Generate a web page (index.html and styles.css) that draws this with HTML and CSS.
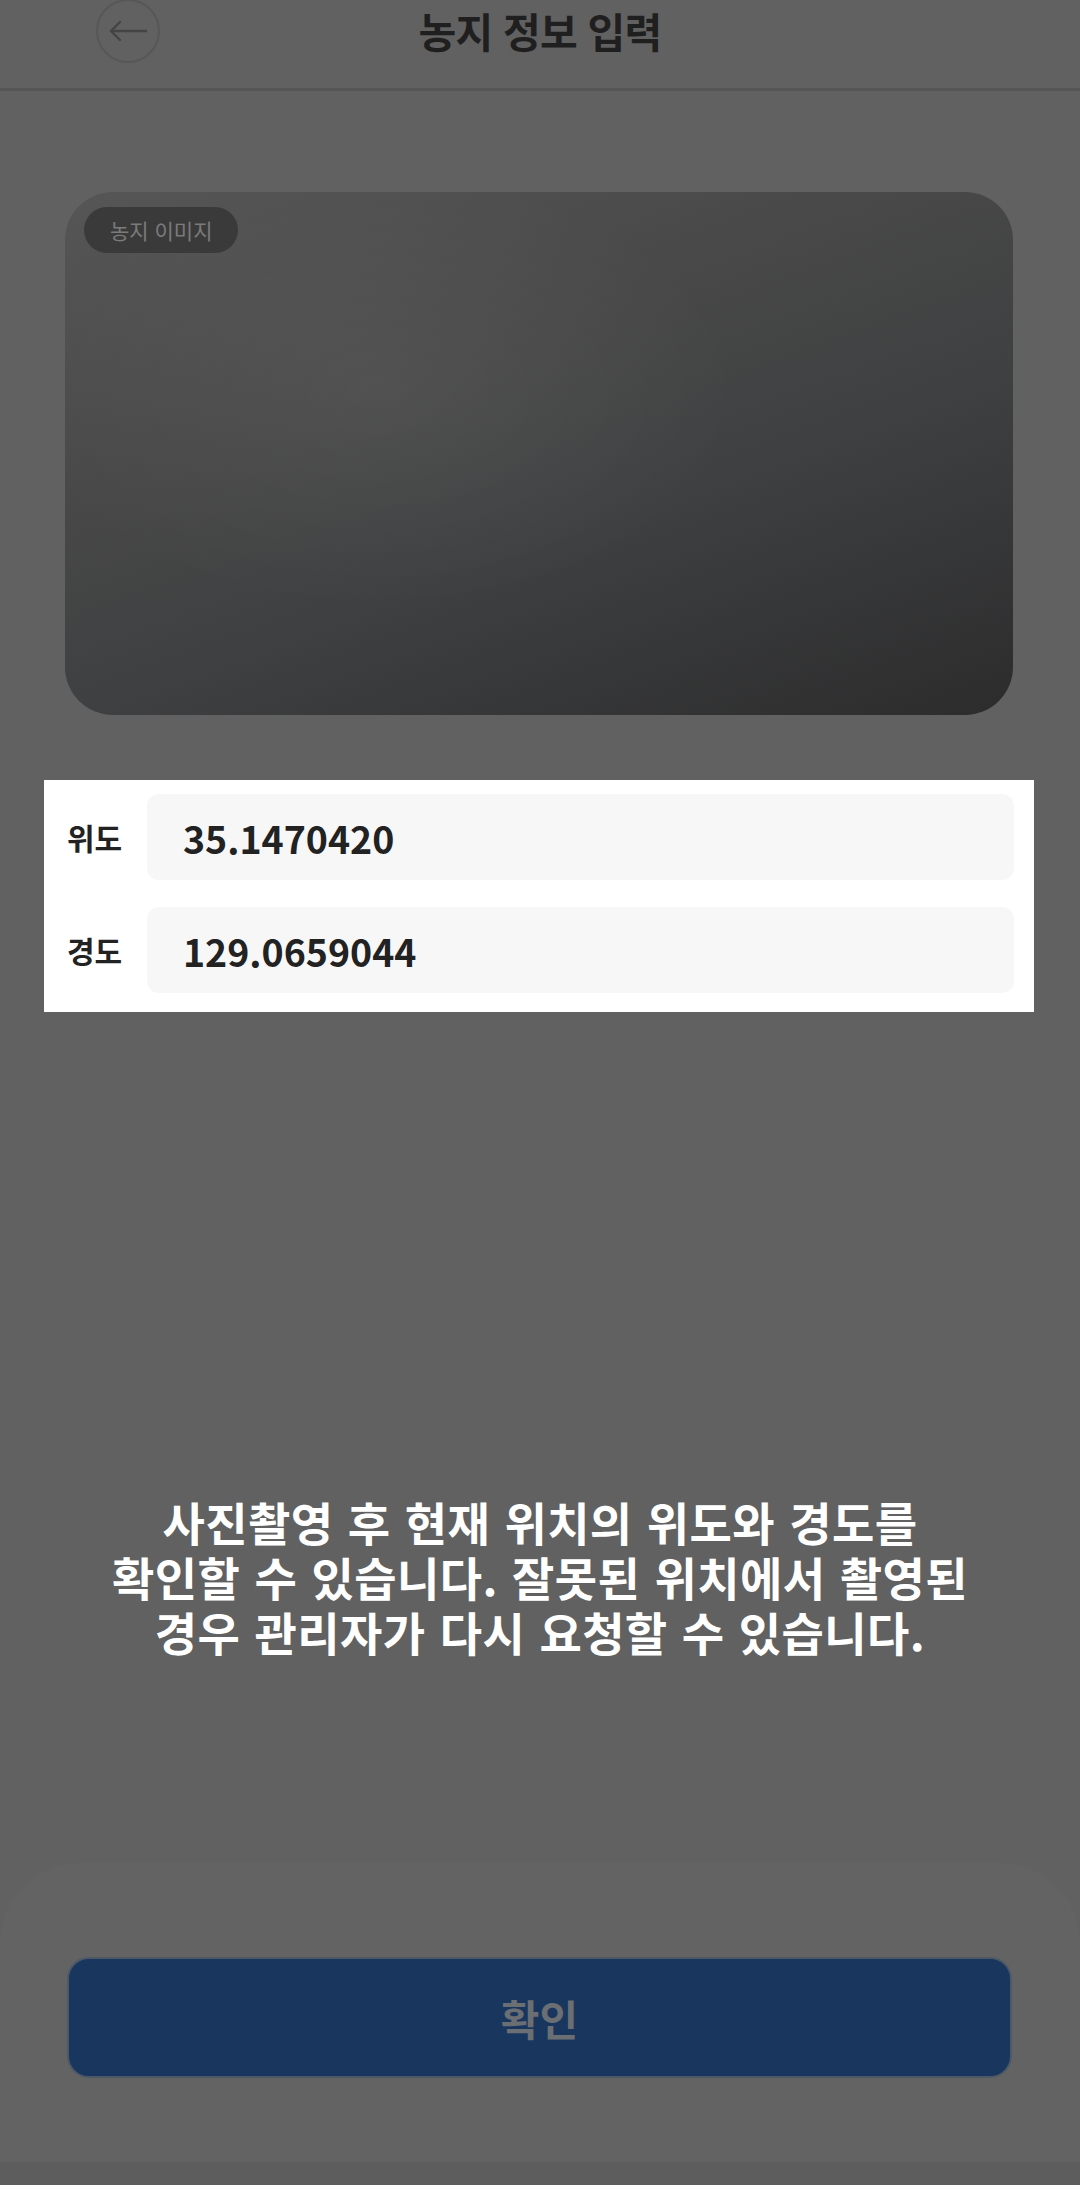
FILE: index.html
```html
<!DOCTYPE html>
<html lang="ko">
<head>
<meta charset="utf-8">
<title>농지 정보 입력</title>
<link rel="stylesheet" href="styles.css">
</head>
<body>
<div class="screen">
  <header class="header">
    <button class="back" aria-label="뒤로">
      <svg width="40" height="22" viewBox="0 0 40 22"><path d="M38 11H3M12 2L3 11l9 9" fill="none" stroke="#444" stroke-width="2.4" stroke-linecap="round" stroke-linejoin="round"/></svg>
    </button>
    <h1 class="title">농지 정보 입력</h1>
  </header>

  <main class="content">
    <div class="photo">
      <span class="badge">농지 이미지</span>
    </div>

    <section class="coords">
      <div class="row">
        <span class="label">위도</span>
        <div class="field">35.1470420</div>
      </div>
      <div class="row">
        <span class="label">경도</span>
        <div class="field">129.0659044</div>
      </div>
    </section>

    <p class="notice">사진촬영 후 현재 위치의 위도와 경도를<br>확인할 수 있습니다. 잘못된 위치에서 촬영된<br>경우 관리자가 다시 요청할 수 있습니다.</p>
  </main>

  <footer class="sheet">
    <button class="confirm">확인</button>
  </footer>
  <div class="navbar"></div>
</div>
</body>
</html>
```

FILE: styles.css
```css
* { box-sizing: border-box; }
html, body {
  margin: 0;
  padding: 0;
  background: #616161;
  font-family: "Noto Sans CJK KR", "Noto Sans", sans-serif;
}
.screen {
  width: 1080px;
  height: 2185px;
  display: flex;
  flex-direction: column;
  overflow: hidden;
}
.header {
  height: 91px;
  border-bottom: 3px solid #555;
  display: flex;
  align-items: flex-start;
  justify-content: center;
  position: relative;
}
.back {
  position: absolute;
  left: 96px;
  top: -1px;
  width: 64px;
  height: 64px;
  border-radius: 50%;
  border: 2px solid #575757;
  background: transparent;
  display: flex;
  align-items: center;
  justify-content: center;
  padding: 0;
}
.title {
  margin: 0;
  height: 62px;
  line-height: 60px;
  font-size: 41px;
  font-weight: 700;
  color: #1f1f1f;
  letter-spacing: -0.8px;
}
.content {
  flex: 1;
  display: flex;
  flex-direction: column;
}
.photo {
  position: relative;
  margin: 101px 67px 0 65px;
  height: 523px;
  border-radius: 48px;
  background:
    radial-gradient(ellipse 55% 60% at 33% 38%, rgba(255,255,255,0.05), rgba(255,255,255,0) 70%),
    linear-gradient(160deg, #565656 0%, #4a4a4a 30%, #3f4041 60%, #2c2c2d 100%);
}
.badge {
  position: absolute;
  left: 19px;
  top: 15px;
  height: 46px;
  padding: 0 26px;
  border-radius: 23px;
  background: #3a3a3a;
  color: #7b7b7b;
  font-size: 21px;
  line-height: 46px;
}
.coords {
  margin: 65px 46px 0 44px;
  background: #fff;
  padding: 14px 20px 19px 23px;
  display: flex;
  flex-direction: column;
  gap: 27px;
}
.row {
  display: flex;
  align-items: center;
  height: 86px;
}
.label {
  width: 80px;
  font-size: 30px;
  font-weight: 700;
  color: #222;
}
.field {
  flex: 1;
  height: 86px;
  background: #f7f7f7;
  border-radius: 12px;
  padding-left: 36px;
  display: flex;
  align-items: center;
  font-size: 37.5px;
  font-weight: 700;
  color: #222;
}
.notice {
  margin: 482px 0 0;
  text-align: center;
  color: #fff;
  font-size: 46px;
  font-weight: 700;
  line-height: 55px;
  letter-spacing: 0.4px;
  word-spacing: 1px;
}
.sheet {
  height: 299px;
  background: #636363;
  border-radius: 80px 80px 0 0;
  padding: 94px 68px 0 67px;
}
.confirm {
  width: 100%;
  height: 121px;
  border-radius: 22px;
  border: 2px solid #4d5866;
  background: #19365f;
  color: #6b6e72;
  font-family: inherit;
  font-size: 42px;
  font-weight: 700;
}
.navbar {
  height: 23px;
  background: #5d5d5d;
}
```
